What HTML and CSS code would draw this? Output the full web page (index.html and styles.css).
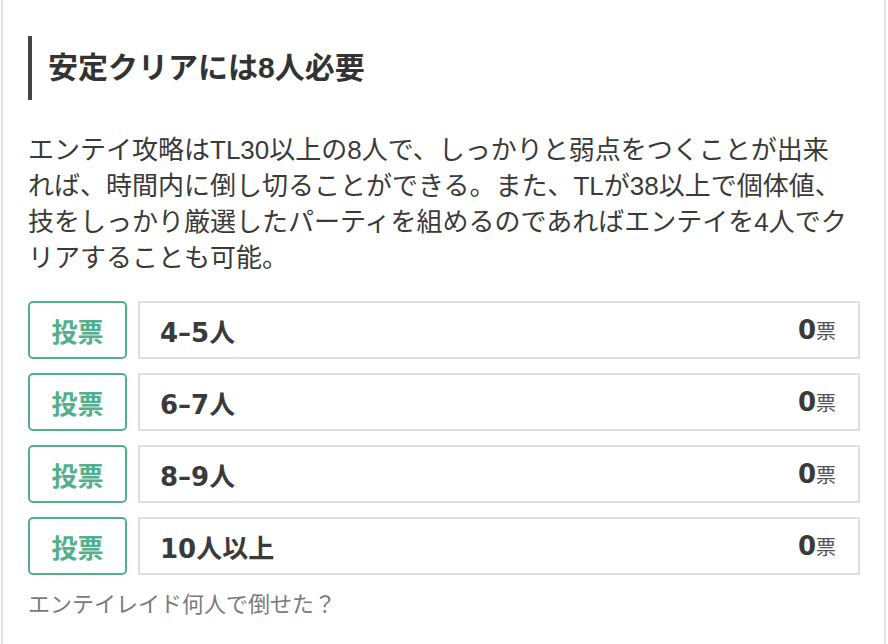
FILE: index.html
```html
<!DOCTYPE html>
<html lang="ja">
<head>
    <meta charset="UTF-8">
    <meta name="viewport" content="width=device-width, initial-scale=1.0">
    <title>エンテイレイド 投票</title>
    <link rel="stylesheet" href="styles.css">
</head>
<body>
    <div class="card">
        <h2 class="section-title">安定クリアには8人必要</h2>

        <p class="section-text">エンテイ攻略はTL30以上の8人で、しっかりと弱点をつくことが出来れば、時間内に倒し切ることができる。また、TLが38以上で個体値、技をしっかり厳選したパーティを組めるのであればエンテイを4人でクリアすることも可能。</p>

        <div class="vote-list">
            <div class="vote-row">
                <button class="vote-btn">投票</button>
                <div class="vote-option">
                    <span class="vote-label">4–5人</span>
                    <span class="vote-count">0<small>票</small></span>
                </div>
            </div>
            <div class="vote-row">
                <button class="vote-btn">投票</button>
                <div class="vote-option">
                    <span class="vote-label">6–7人</span>
                    <span class="vote-count">0<small>票</small></span>
                </div>
            </div>
            <div class="vote-row">
                <button class="vote-btn">投票</button>
                <div class="vote-option">
                    <span class="vote-label">8–9人</span>
                    <span class="vote-count">0<small>票</small></span>
                </div>
            </div>
            <div class="vote-row">
                <button class="vote-btn">投票</button>
                <div class="vote-option">
                    <span class="vote-label">10人以上</span>
                    <span class="vote-count">0<small>票</small></span>
                </div>
            </div>
        </div>

        <p class="vote-caption">エンテイレイド何人で倒せた？</p>
    </div>
</body>
</html>
```

FILE: styles.css
```css
* {
    margin: 0;
    padding: 0;
    box-sizing: border-box;
}

body {
    font-family: 'Liberation Sans', 'Noto Sans CJK JP', sans-serif;
    background: #ffffff;
    color: #333333;
    overflow: hidden;
}

.card {
    margin: 0 2px 0 1px;
    min-height: 100vh;
    padding: 36px 24px 40px 25px;
    border-left: 2px solid #e2e2e2;
    border-right: 2px solid #e2e2e2;
    background: #ffffff;
}

.section-title {
    border-left: 4px solid #444444;
    padding: 14px 0 14px 16px;
    font-size: 30px;
    line-height: 36px;
    font-weight: 700;
    color: #333333;
    margin-bottom: 32px;
}

.section-text {
    font-size: 26px;
    line-height: 36px;
    color: #3a3a3a;
    padding-right: 6px;
    margin-bottom: 25px;
}

.vote-list {
    display: flex;
    flex-direction: column;
    gap: 14px;
}

.vote-row {
    display: flex;
    gap: 11px;
    height: 58px;
}

.vote-btn {
    width: 99px;
    flex-shrink: 0;
    background: #ffffff;
    border: 2px solid #52b08d;
    border-radius: 5px;
    color: #52b08d;
    font-family: inherit;
    font-size: 26px;
    font-weight: 700;
    cursor: pointer;
}

.vote-option {
    flex: 1;
    display: flex;
    justify-content: space-between;
    align-items: center;
    border: 2px solid #e0e0e0;
    padding: 0 22px 0 20px;
}

/* numbers in the options are set wider than the body text */
.vote-label,
.vote-count {
    font-family: 'DejaVu Sans', 'Noto Sans CJK JP', sans-serif;
    font-size: 26px;
    font-weight: 700;
    color: #3a3a3a;
}

.vote-count small {
    font-family: 'Noto Sans CJK JP', sans-serif;
    font-size: 20px;
    font-weight: 400;
    color: #555555;
}

.vote-caption {
    margin-top: 15px;
    font-size: 22px;
    line-height: 30px;
    color: #7a7a7a;
}
```
